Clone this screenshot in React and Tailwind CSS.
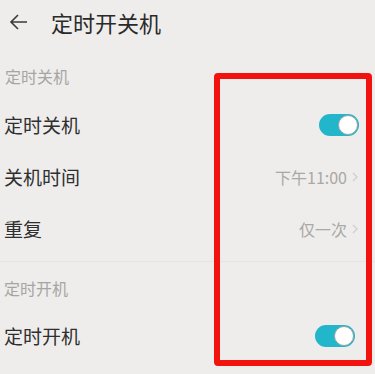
import React from 'react';

const FONT = { fontFamily: '"Noto Sans CJK SC", "Noto Sans", sans-serif' };

function Toggle() {
  return (
    <div className="w-[40px] h-[22px] rounded-full bg-[#22b6cb] flex items-center justify-end p-[1px]">
      <div className="w-[20px] h-[20px] rounded-full bg-white border border-[#9aa4a8]" />
    </div>
  );
}

function Chevron() {
  return (
    <svg width="8" height="12" viewBox="0 0 8 12" className="ml-[4px]">
      <path d="M2 2 L6 6 L2 10" fill="none" stroke="#d0cfcd" strokeWidth="1.3" />
    </svg>
  );
}

function Row({ label, children }) {
  return (
    <div className="h-[52px] flex items-center justify-between pl-[4px] pr-[16px]">
      <span className="text-[19px] text-[#2f2f2f]">{label}</span>
      {children}
    </div>
  );
}

export default function App() {
  return (
    <div className="relative w-[375px] h-[374px] overflow-hidden bg-[#eeedeb]" style={FONT}>
      {/* header */}
      <div className="h-[44px] flex items-center">
        <svg width="20" height="20" viewBox="0 0 20 20" className="ml-[9px]">
          <path d="M18 10 H3 M9 3 L2 10 L9 17" fill="none" stroke="#3a3a3a" strokeWidth="1.6" />
        </svg>
        <span className="ml-[22px] text-[22px] text-[#2a2a2a]">定时开关机</span>
      </div>

      <div className="mt-[20px] h-[24px] flex items-center pl-[5px] text-[16px] text-[#a6a5a3]">定时关机</div>
      <div className="mt-[11px]">
        <Row label="定时关机">
          <Toggle />
        </Row>
        <Row label="关机时间">
          <div className="flex items-center text-[16px] text-[#a9a8a6]">
            下午11:00<Chevron />
          </div>
        </Row>
        <Row label="重复">
          <div className="flex items-center text-[16px] text-[#a9a8a6]">
            仅一次<Chevron />
          </div>
        </Row>
      </div>
      <div className="mt-[6px] h-[1px] bg-[#e6e5e3]" />

      <div className="mt-[14px] h-[24px] flex items-center pl-[4px] text-[16px] text-[#a6a5a3]">定时开机</div>
      <div className="mt-[10px]">
        <Row label="定时开机">
          <div className="mr-[4px]"><Toggle /></div>
        </Row>
      </div>

      {/* annotation box */}
      <div className="absolute left-[214px] top-[73px] w-[158px] h-[293px] border-[6px] border-[#f2130f] rounded-[4px]" />
    </div>
  );
}
